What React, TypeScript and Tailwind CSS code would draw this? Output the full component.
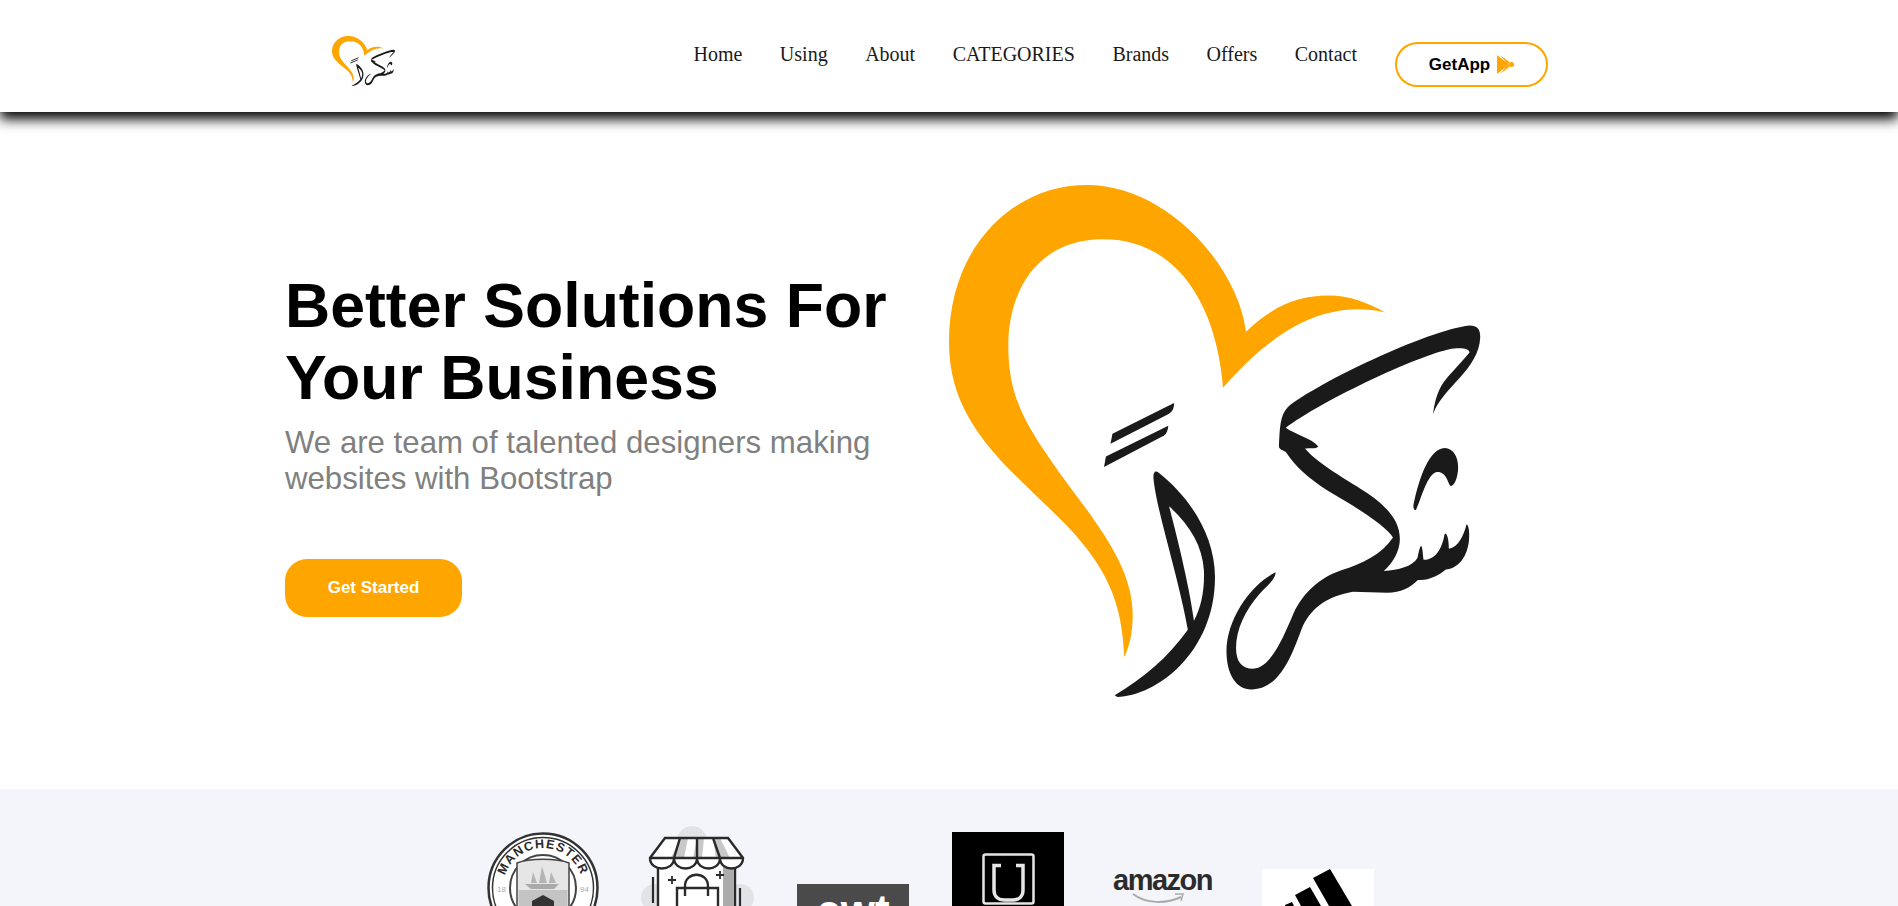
import type { ReactNode } from "react";

const sans = "font-['Liberation_Sans',Arial,sans-serif]";
const serif = "font-['Liberation_Serif','Times_New_Roman',serif]";

const navItems = ["Home", "Using", "About", "CATEGORIES", "Brands", "Offers", "Contact"];

function ShukranLogo({ className }: { className: string }) {
  return (
    <svg viewBox="50 45 1390 1482" preserveAspectRatio="none" className={className}>
      <path
        fill="#ffa500"
        d="M508 1412 C502 1260 470 1150 330 1000 C180 840 50 720 50 500 C50 220 220 45 410 45 C620 45 805 280 826 470 C900 390 970 365 1040 365 C1100 365 1140 385 1190 414 C1040 375 900 460 766 632 C750 400 650 200 450 202 C290 202 205 340 205 510 C205 660 250 740 340 880 C440 1030 530 1150 530 1290 C530 1340 522 1380 508 1412 Z"
      />
      <g fill="#1a1a1a">
        <path d="M472 794 L477 765 L638 676 C638 692 634 702 620 710 Z" />
        <path d="M455 861 L460 831 L623 742 C622 755 619 764 612 770 Z" />
        <path d="M483 1522 C560 1470 620 1415 674 1332 C650 1180 590 980 584 890 C584 874 590 870 598 878 C680 950 745 1060 745 1180 C745 1400 590 1525 490 1527 Z M625 975 C650 1080 680 1220 690 1306 C710 1265 718 1215 716 1160 C712 1090 680 1030 625 975 Z" />
        <path d="M1315 708 C1318 670 1330 630 1350 605 C1370 580 1395 550 1410 530 C1410 520 1395 516 1370 518 C1300 525 1020 670 930 748 C950 765 1000 780 1015 802 C1010 810 990 806 980 808 C1020 860 1110 910 1160 950 C1200 985 1228 1020 1228 1070 C1228 1105 1210 1140 1186 1162 C1225 1160 1260 1150 1274 1125 C1278 1105 1280 1090 1284 1090 C1288 1095 1288 1120 1290 1130 C1320 1130 1338 1100 1345 1055 C1352 1050 1356 1075 1356 1098 C1380 1095 1395 1060 1402 1028 C1410 1030 1410 1060 1408 1080 C1402 1125 1380 1155 1348 1158 C1330 1175 1300 1192 1275 1188 C1255 1210 1230 1225 1195 1225 L1105 1222 C1040 1235 1000 1265 975 1320 C950 1390 920 1505 840 1505 C800 1505 775 1460 775 1395 C775 1300 840 1200 903 1166 C905 1185 880 1205 860 1230 C825 1275 800 1330 800 1385 C800 1425 815 1445 845 1445 C890 1445 925 1350 950 1285 C975 1225 1020 1180 1075 1160 C1130 1140 1180 1115 1210 1065 C1190 1030 1110 975 1040 930 C990 895 955 860 930 818 C920 812 912 810 912 800 C914 750 915 710 935 688 C1010 620 1300 465 1410 452 C1430 452 1438 462 1438 485 C1435 580 1340 630 1315 708 Z" />
        <path d="M1270 986 C1262 986 1262 975 1266 958 C1280 890 1305 808 1345 806 C1370 808 1382 835 1380 870 C1378 895 1370 918 1360 916 C1352 905 1350 875 1325 876 C1300 880 1285 950 1270 986 Z" />
      </g>
    </svg>
  );
}

function PlayMark() {
  return (
    <svg viewBox="0 0 17 19" className="w-[17px] h-[19px]">
      <path d="M0 0 L12 9.5 L0 19 Z" fill="#ffa500" />
      <path d="M3 0 L13 7.5 L10.5 9 Z M3 19 L13 11.5 L10.5 10 Z" fill="#ffa500" />
      <circle cx="14.5" cy="9.5" r="2.5" fill="#ffa500" />
    </svg>
  );
}

function ManCityBadge() {
  return (
    <svg viewBox="0 0 112 112" className="w-[112px] h-[112px]">
      <circle cx="56" cy="56" r="54.5" fill="#fff" stroke="#333" strokeWidth="2.5" />
      <circle cx="56" cy="56" r="50.5" fill="none" stroke="#333" strokeWidth="1.5" />
      <circle cx="56" cy="56" r="33" fill="#fff" stroke="#444" strokeWidth="2" />
      <defs>
        <path id="badgeArc" d="M16 56 A40 40 0 0 1 96 56" />
      </defs>
      <text fontFamily="Liberation Sans, sans-serif" fontWeight="700" fontSize="12.5" letterSpacing="1.2" fill="#2a2a2a">
        <textPath href="#badgeArc" startOffset="50%" textAnchor="middle">
          MANCHESTER
        </textPath>
      </text>
      <text x="10" y="60" fontFamily="Liberation Sans, sans-serif" fontSize="8" fill="#aaa">18</text>
      <text x="93" y="60" fontFamily="Liberation Sans, sans-serif" fontSize="8" fill="#aaa">94</text>
      <path d="M30 31 C42 26 70 26 82 31 L82 80 L30 80 Z" fill="#e6e6e6" stroke="#444" strokeWidth="1.5" />
      <path d="M31.5 58 H80.5 V80 H31.5 Z" fill="#c4c4c4" />
      <path d="M38 52 L72 52 L67 57 L44 57 Z" fill="#aaa" />
      <path d="M44 51 L46 40 L50 51 Z M52 51 L55 34 L60 51 Z M62 51 L64 40 L69 51 Z" fill="#b5b5b5" />
      <path d="M56 63 L67 69 V90 H45 V69 Z" fill="#333" />
    </svg>
  );
}

function StoreIcon() {
  return (
    <svg viewBox="0 0 112 80" className="w-[112px] h-[80px] overflow-visible" fill="none" stroke="#2a2a2a" strokeWidth="2">
      <circle cx="50" cy="15" r="15" fill="#e2e3e7" stroke="none" />
      <circle cx="13" cy="72" r="14" fill="#e2e3e7" stroke="none" />
      <circle cx="98" cy="72" r="14" fill="#e2e3e7" stroke="none" />
      <rect x="16" y="32" width="77" height="50" fill="#fff" strokeWidth="2.4" />
      <path d="M81 32 H92 V80 H81 Z" fill="#acacac" stroke="none" />
      <path d="M23 12 H86 L101 32 C101 46 78 46 78 32 C78 46 55 46 55 32 C55 46 32 46 32 32 C32 46 8 46 8 32 Z" fill="#fff" stroke="none" />
      <path d="M29 32 L38 12 H46 L42 32 Z M51 32 L55 12 H62 L60 32 Z M74 32 L71 12 H78 L88 32 Z" fill="#c8c8c8" stroke="none" />
      <path d="M23 12 H86 L101 32 C101 46 78 46 78 32 C78 46 55 46 55 32 C55 46 32 46 32 32 C32 46 8 46 8 32 Z M8 32 H101 M38 12 L32 32 M55 12 V32 M71 12 L78 32" strokeWidth="2.4" />
      <path d="M35 62 H76 V82 H35 Z" fill="#fff" strokeWidth="2.4" />
      <path d="M43 70 V60 C43 45 66 45 66 60 V70" strokeWidth="2.4" />
      <path d="M30 50 V58 M26 54 H34 M78 45 V53 M74 49 H82" strokeWidth="1.8" />
      <path d="M11 51 V77 M98 62 V80" strokeWidth="2.2" />
    </svg>
  );
}

function UberMark() {
  return (
    <svg viewBox="0 0 112 74" className="w-[112px] h-[74px]" fill="none" stroke="#e6e6e6">
      <rect x="31.5" y="22.5" width="50" height="49" rx="2" strokeWidth="2.5" />
      <path d="M49 33.5 H42 V58 C42 65 47 68 52 68 H61 C66 68 71 65 71 58 V33.5 H64" strokeWidth="3.5" />
    </svg>
  );
}

function AmazonSmile() {
  return (
    <svg viewBox="0 0 60 12" className="block ml-[15px] -mt-[3px] w-[60px] h-[12px]" fill="none">
      <path d="M5 1 C18 11 38 11 53 4" stroke="#aaa" strokeWidth="2" />
      <path d="M47 1 L55 1 L53 8" stroke="#aaa" strokeWidth="1.5" />
    </svg>
  );
}

function AdidasBars() {
  return (
    <svg viewBox="0 0 112 37" className="block w-[112px] h-[37px]">
      <polygon points="51,9 68,0 90,37 67,37" fill="#000" />
      <polygon points="33,26 48,18 59,37 39,37" fill="#000" />
      <polygon points="23,36 30,33 32,37 23,37" fill="#000" />
    </svg>
  );
}

function BrandBox({ className, children }: { className: string; children?: ReactNode }) {
  return <div className={`w-[112px] shrink-0 ${className}`}>{children}</div>;
}

export default function App() {
  return (
    <div className={`h-[906px] overflow-hidden bg-white ${sans}`}>
      <header className="relative z-10 h-[112px] flex items-center bg-white pl-[332px] pr-[350px] shadow-[0_7px_12px_#000]">
        <ShukranLogo className="mt-[10px] w-[63px] h-[50px]" />
        <nav className={`ml-auto flex items-center gap-[37.5px] -mt-[5px] text-[20px] text-[#1a1a1a] ${serif}`}>
          {navItems.map((item) => (
            <a key={item}>{item}</a>
          ))}
        </nav>
        <button className="ml-[38px] mt-[17px] w-[153px] h-[45px] flex items-center justify-center gap-[7px] rounded-[24px] border-2 border-[#ffa500] text-[17px] font-bold text-black">
          GetApp
          <PlayMark />
        </button>
      </header>

      <section className="h-[677px] flex pl-[285px]">
        <div className="w-[664px] pt-[157px]">
          <h1 className="text-[62.6px] leading-[72px] font-bold text-black">
            Better Solutions For
            <br />
            Your Business
          </h1>
          <p className="mt-[12px] text-[31.2px] leading-[36px] text-[#808080]">
            We are team of talented designers making
            <br />
            websites with Bootstrap
          </p>
          <button className="mt-[62px] w-[177px] h-[58px] rounded-[22px] bg-[#ffa500] text-[17px] font-bold text-white">
            Get Started
          </button>
        </div>
        <ShukranLogo className="mt-[73px] w-[532px] h-[512px]" />
      </section>

      <section className="h-[117px] overflow-hidden flex pl-[487px] gap-[43px] bg-[#f3f5fa]">
        <BrandBox className="mt-[43px]">
          <ManCityBadge />
        </BrandBox>
        <BrandBox className="mt-[37px]">
          <StoreIcon />
        </BrandBox>
        <BrandBox className="mt-[95px] h-[60px] bg-[#4a4a4a] text-center text-white font-bold text-[44px] leading-[44px] pt-[5px]">
          cwt
        </BrandBox>
        <BrandBox className="mt-[43px] h-[80px] bg-black">
          <UberMark />
        </BrandBox>
        <BrandBox className="mt-[75px] pl-[6px]">
          <span className="block text-[29px] leading-[32px] font-bold text-[#2b2b2b] tracking-[-1.5px]">amazon</span>
          <AmazonSmile />
        </BrandBox>
        <BrandBox className="mt-[80px] bg-white">
          <AdidasBars />
        </BrandBox>
      </section>
    </div>
  );
}
